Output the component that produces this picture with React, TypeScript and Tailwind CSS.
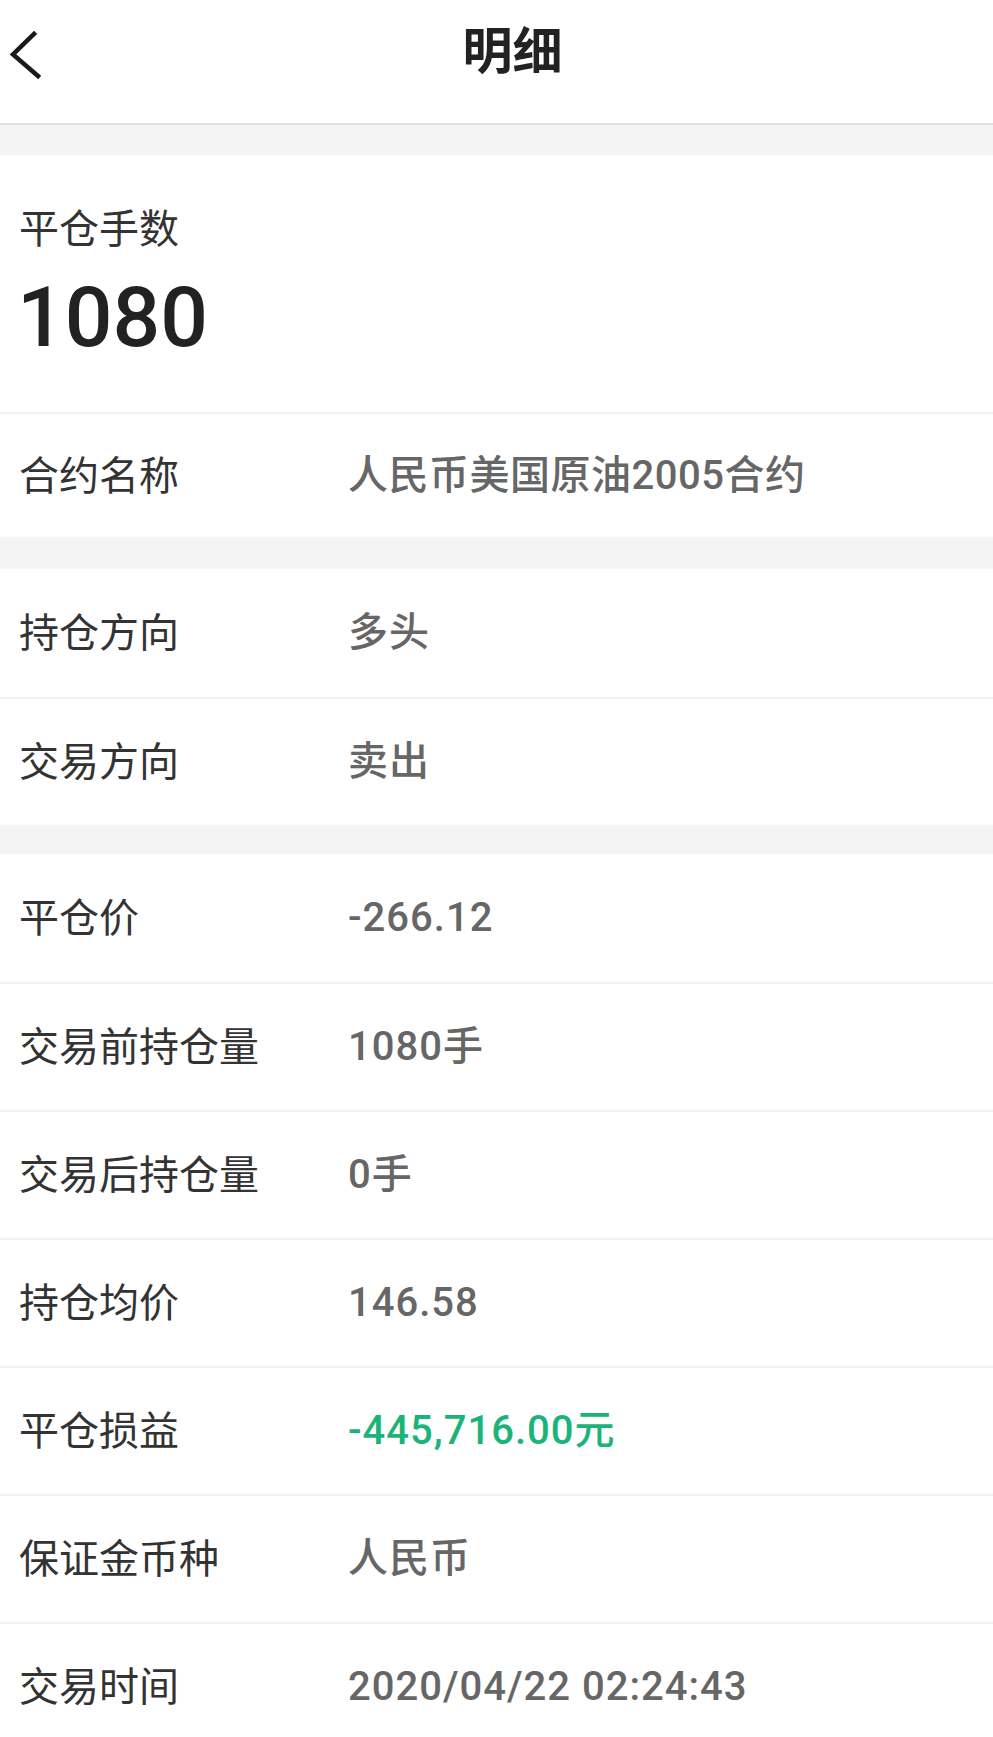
const FONT = {
  fontFamily: '"Liberation Sans", "Noto Sans CJK SC", sans-serif',
};

const NUM = {
  fontFamily: 'Roboto, "Noto Sans CJK SC", sans-serif',
};

type Row = { label: string; value: string; green?: boolean };

const GROUPS: Row[][] = [
  [
    { label: "持仓方向", value: "多头" },
    { label: "交易方向", value: "卖出" },
  ],
  [
    { label: "平仓价", value: "-266.12" },
    { label: "交易前持仓量", value: "1080手" },
    { label: "交易后持仓量", value: "0手" },
    { label: "持仓均价", value: "146.58" },
    { label: "平仓损益", value: "-445,716.00元", green: true },
    { label: "保证金币种", value: "人民币" },
    { label: "交易时间", value: "2020/04/22 02:24:43" },
  ],
];

function DetailRow({ row, first }: { row: Row; first: boolean }) {
  return (
    <div
      className={
        "flex items-center h-[128px] pl-[19px] bg-white " +
        (first ? "" : "border-t-2 border-[#f2f2f2]")
      }
    >
      <span className="w-[329px] shrink-0 text-[40px] text-[#333333]">{row.label}</span>
      <span
        style={NUM}
        className={
          "text-[40px] font-medium tracking-[1px] " +
          (row.green ? "text-[#1bb478]" : "text-[#666666]")
        }
      >
        {row.value}
      </span>
    </div>
  );
}

export default function App() {
  return (
    <div className="w-[993px] h-[1737px] overflow-hidden bg-[#f4f4f4]" style={FONT}>
      <header className="relative h-[125px] bg-white border-b-2 border-[#e2e2e2] flex items-center justify-center">
        <svg
          className="absolute left-[8px] top-[30px]"
          width="36"
          height="50"
          viewBox="0 0 36 50"
          fill="none"
        >
          <path d="M26 4 L5 24.5 L30 46" stroke="#1a1a1a" strokeWidth="4.5" strokeLinecap="square" />
        </svg>
        <h1 className="text-[50px] font-bold text-[#222222] -mt-[18px] ml-[32px]">明细</h1>
      </header>

      <div className="mt-[30px] bg-white">
        <div className="h-[257px] pl-[19px] pt-[50px]">
          <div className="text-[40px] leading-[48px] text-[#333333]">平仓手数</div>
          <div style={NUM} className="text-[84px] leading-[100px] font-medium text-[#222222] -ml-[2px] mt-[15px]">1080</div>
        </div>
        <div className="flex items-center h-[125px] pl-[19px] border-t-2 border-[#f2f2f2]">
          <span className="w-[329px] shrink-0 text-[40px] text-[#333333]">合约名称</span>
          <span style={NUM} className="text-[40px] font-medium tracking-[0.5px] text-[#666666]">人民币美国原油2005合约</span>
        </div>
      </div>

      {GROUPS.map((g, gi) => (
        <div key={gi} className={gi === 0 ? "mt-[32px]" : "mt-[29px]"}>
          {g.map((r, i) => (
            <DetailRow key={r.label} row={r} first={i === 0} />
          ))}
        </div>
      ))}
    </div>
  );
}
